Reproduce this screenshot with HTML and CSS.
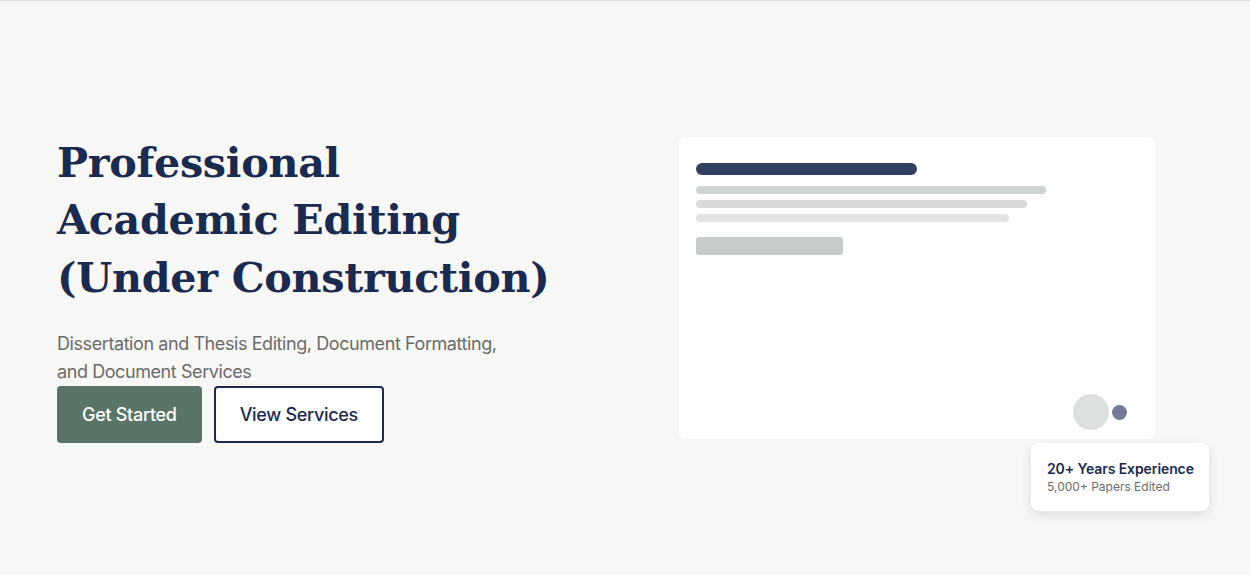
FILE: index.html
```html
<!DOCTYPE html>
<html lang="en">
<head>
<meta charset="utf-8">
<title>Professional Academic Editing</title>
<link rel="stylesheet" href="styles.css">
</head>
<body>
<div class="topline"></div>
<section class="hero">
  <div class="hero-text">
    <h1 class="title">Professional Academic Editing (Under Construction)</h1>
    <p class="subtitle">Dissertation and Thesis Editing, Document Formatting, and Document Services</p>
    <div class="actions">
      <a class="btn btn-primary" href="#">Get Started</a>
      <a class="btn btn-outline" href="#">View Services</a>
    </div>
  </div>
  <div class="hero-visual">
    <div class="doc-card">
      <div class="bar-title"></div>
      <div class="bar-line l1"></div>
      <div class="bar-line l2"></div>
      <div class="bar-line l3"></div>
      <div class="bar-block"></div>
      <div class="dots">
        <span class="dot-big"></span>
        <span class="dot-small"></span>
      </div>
      <div class="badge">
        <div class="badge-title">20+ Years Experience</div>
        <div class="badge-sub">5,000+ Papers Edited</div>
      </div>
    </div>
  </div>
</section>
</body>
</html>
```
FILE: styles.css
```css
* { box-sizing: border-box; }
html, body {
  margin: 0;
  padding: 0;
  background: #f7f7f5;
  font-family: Inter, "Noto Sans", sans-serif;
}
.topline {
  height: 1px;
  background: #e3e3e1;
}
.hero {
  height: 574px;
  display: grid;
  grid-template-columns: 622px 476px;
  align-items: center;
  padding-left: 57px;
}
.hero-text {
  padding-top: 1px;
}
.title {
  margin: 0 0 24px;
  font-family: "DejaVu Serif", "Liberation Serif", serif;
  font-weight: 700;
  font-size: 41.3px;
  line-height: 57.6px;
  color: #1b2a4f;
  max-width: 505px;
  letter-spacing: -0.3px;
}
.subtitle {
  margin: 0;
  font-size: 18px;
  line-height: 28px;
  color: #6b6b6b;
  max-width: 470px;
  letter-spacing: -0.42px;
}
.actions {
  display: flex;
  gap: 12px;
}
.btn {
  display: inline-block;
  padding: 13px 23px;
  font-size: 18px;
  line-height: 27px;
  font-weight: 500;
  letter-spacing: -0.3px;
  text-decoration: none;
  border-radius: 4px;
  border: 2px solid transparent;
}
.btn-primary {
  background: #5a7468;
  border-color: #5a7468;
  color: #ffffff;
}
.btn-outline {
  background: #ffffff;
  border-color: #1b2a4f;
  color: #1b2a4f;
  padding: 13px 24px;
}
.doc-card {
  position: relative;
  height: 302px;
  background: #ffffff;
  border-radius: 7px;
  padding: 26px 17px 9px;
  display: flex;
  flex-direction: column;
}
.bar-title {
  width: 221px;
  height: 12px;
  border-radius: 6px;
  background: #323f61;
  margin-bottom: 11px;
}
.bar-line {
  height: 8px;
  border-radius: 4px;
  margin-bottom: 6px;
}
.l1 { width: 350px; background: #cfd4d2; }
.l2 { width: 331px; background: #d8dbda; }
.l3 { width: 313px; background: #e2e4e3; margin-bottom: 15px; }
.bar-block {
  width: 147px;
  height: 18px;
  border-radius: 3px;
  background: #c5ccc9;
}
.dots {
  margin-top: auto;
  margin-right: 11px;
  display: flex;
  align-items: center;
  justify-content: flex-end;
  gap: 3px;
}
.dot-big {
  width: 36px;
  height: 36px;
  border-radius: 50%;
  background: #dce0de;
}
.dot-small {
  width: 15px;
  height: 15px;
  border-radius: 50%;
  background: #737b96;
}
.badge {
  position: absolute;
  left: 352px;
  top: 306px;
  width: 178px;
  padding: 16px;
  background: #ffffff;
  border-radius: 8px;
  box-shadow: 0 4px 12px rgba(0, 0, 0, 0.10);
}
.badge-title {
  font-size: 14px;
  line-height: 20px;
  font-weight: 600;
  color: #1b2a4f;
  white-space: nowrap;
  letter-spacing: -0.1px;
}
.badge-sub {
  font-size: 12px;
  line-height: 16px;
  color: #6b6b6b;
  white-space: nowrap;
}
```
